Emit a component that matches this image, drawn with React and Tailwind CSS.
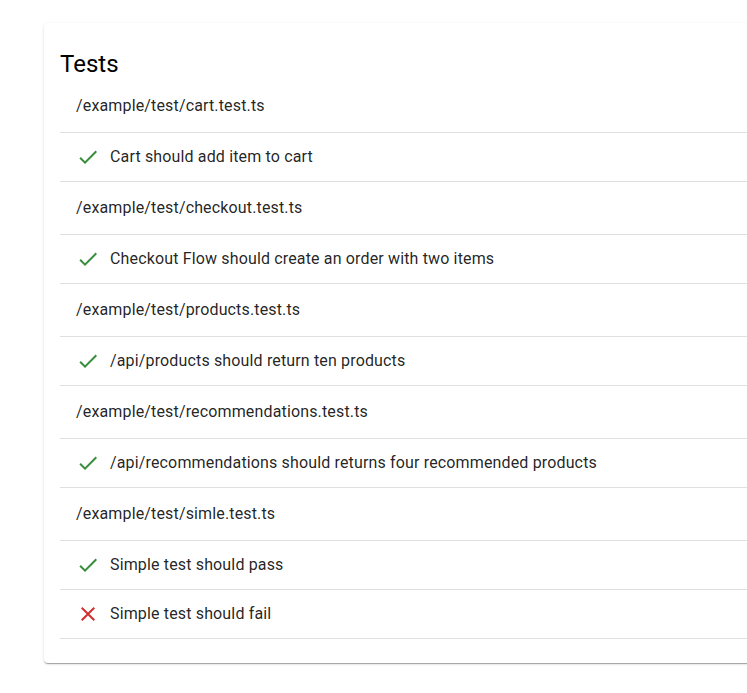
const suites = [
  { file: "/example/test/cart.test.ts", tests: [{ name: "Cart should add item to cart", ok: true }] },
  { file: "/example/test/checkout.test.ts", tests: [{ name: "Checkout Flow should create an order with two items", ok: true }] },
  { file: "/example/test/products.test.ts", tests: [{ name: "/api/products should return ten products", ok: true }] },
  {
    file: "/example/test/recommendations.test.ts",
    tests: [{ name: "/api/recommendations should returns four recommended products", ok: true }],
  },
  {
    file: "/example/test/simle.test.ts",
    tests: [
      { name: "Simple test should pass", ok: true },
      { name: "Simple test should fail", ok: false },
    ],
  },
];

function CheckIcon() {
  return (
    <svg viewBox="0 0 24 24" className="w-6 h-6 fill-[#388e3c]">
      <path d="M9 16.17 4.83 12l-1.42 1.41L9 19 21 7l-1.41-1.41z" />
    </svg>
  );
}

function CloseIcon() {
  return (
    <svg viewBox="0 0 24 24" className="w-6 h-6 fill-[#d32f2f]">
      <path d="M19 6.41 17.59 5 12 10.59 6.41 5 5 6.41 10.59 12 5 17.59 6.41 19 12 13.41 17.59 19 19 17.59 13.41 12z" />
    </svg>
  );
}

export default function App() {
  return (
    <div className="w-screen min-h-screen overflow-hidden bg-white font-['Roboto',sans-serif]">
      <div className="ml-[44px] mt-[23px] w-[760px] rounded bg-white p-4 shadow-[0px_2px_1px_-1px_rgba(0,0,0,0.2),0px_1px_1px_0px_rgba(0,0,0,0.14),0px_1px_3px_0px_rgba(0,0,0,0.12)]">
        <h2 className="mt-[9px] text-2xl leading-8 text-black">Tests</h2>
        <ul className="pb-2">
          {suites.map((s) => (
            <li key={s.file}>
              <div className="border-b border-[#e0e0e0] px-4 py-[14px] text-base leading-6 tracking-[0.15px] text-black/[0.87]">
                {s.file}
              </div>
              {s.tests.map((t) => (
                <div
                  key={t.name}
                  className="flex items-center border-b border-[#e0e0e0] px-4 py-3 text-base leading-6 tracking-[0.15px] text-black/[0.87]"
                >
                  <span className="w-[34px] shrink-0">{t.ok ? <CheckIcon /> : <CloseIcon />}</span>
                  <span>{t.name}</span>
                </div>
              ))}
            </li>
          ))}
        </ul>
      </div>
    </div>
  );
}
